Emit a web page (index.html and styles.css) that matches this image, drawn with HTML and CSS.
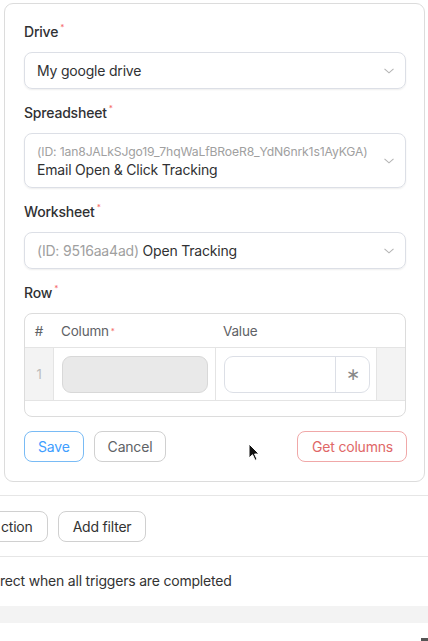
FILE: index.html
```html
<!DOCTYPE html>
<html>
<head lang="en">
    <meta charset="UTF-8">
    <title>Spreadsheet action</title>
    <link rel="stylesheet" href="styles.css">
</head>
<body>
    <div id="page">
        <div class="card">
            <div class="field">
                <div class="label">Drive<span class="req">*</span></div>
                <div class="select">
                    <div class="select-text">My google drive</div>
                    <svg class="chevron" width="10" height="6" viewBox="0 0 10 6"><path d="M0.5 0.8l4.5 4 4.5-4" fill="none" stroke="#b4b4b4" stroke-width="1.1"/></svg>
                </div>
            </div>
            <div class="field">
                <div class="label">Spreadsheet<span class="req">*</span></div>
                <div class="select tall">
                    <div class="select-text">
                        <div class="id small">(ID: 1an8JALkSJgo19_7hqWaLfBRoeR8_YdN6nrk1s1AyKGA)</div>
                        <div>Email Open &amp; Click Tracking</div>
                    </div>
                    <svg class="chevron" width="10" height="6" viewBox="0 0 10 6"><path d="M0.5 0.8l4.5 4 4.5-4" fill="none" stroke="#b4b4b4" stroke-width="1.1"/></svg>
                </div>
            </div>
            <div class="field">
                <div class="label">Worksheet<span class="req">*</span></div>
                <div class="select">
                    <div class="select-text"><span class="id">(ID: 9516aa4ad)</span> Open Tracking</div>
                    <svg class="chevron" width="10" height="6" viewBox="0 0 10 6"><path d="M0.5 0.8l4.5 4 4.5-4" fill="none" stroke="#b4b4b4" stroke-width="1.1"/></svg>
                </div>
            </div>
            <div class="field">
                <div class="label">Row<span class="req">*</span></div>
                <div class="table">
                    <div class="thead">
                        <div class="th num">#</div>
                        <div class="th">Column<span class="req">*</span></div>
                        <div class="th">Value</div>
                        <div class="th"></div>
                    </div>
                    <div class="trow">
                        <div class="td num">1</div>
                        <div class="td"><div class="col-input"></div></div>
                        <div class="td">
                            <div class="val-input">
                                <div class="val-box"></div>
                                <div class="val-btn">&#x2217;</div>
                            </div>
                        </div>
                        <div class="td act"></div>
                    </div>
                    <div class="tfoot"></div>
                </div>
            </div>
            <div class="actions">
                <span class="btn btn-save">Save</span>
                <span class="btn">Cancel</span>
                <span class="spacer"></span>
                <span class="btn btn-red">Get columns</span>
            </div>
            <svg class="cursor" width="12" height="18" viewBox="0 0 12 18"><path d="M1 1v14l3.5-3.3 2.6 5.6 2-0.9-2.5-5.4H11z" fill="#111" stroke="#fff" stroke-width="1"/></svg>
        </div>

        <div class="divider"></div>
        <div class="btn-row">
            <span class="btn btn-cut">ction</span>
            <span class="btn btn-dark">Add filter</span>
        </div>
        <div class="divider"></div>
        <div class="note">rect when all triggers are completed</div>
        <div class="band"></div>
        <div class="mark"></div>
    </div>
</body>
</html>
```

FILE: styles.css
```css
*{
    margin: 0;
    padding: 0;
    box-sizing: border-box;
}
html, body{
    background: #fff;
    overflow: hidden;
}
body{
    font-family: Inter, "Liberation Sans", sans-serif;
    font-size: 14px;
    color: #333;
    letter-spacing: -0.2px;
}
#page{
    width: 428px;
    height: 641px;
    overflow: hidden;
}
.card{
    position: relative;
    margin: 3px 3px 0 4px;
    padding: 18px 18px 19px 19px;
    border: 1px solid #dcdcdc;
    border-radius: 9px;
    background: #fff;
}
.field{
    margin-bottom: 14px;
}
.label{
    font-size: 14px;
    font-weight: 500;
    line-height: 20px;
    color: #303133;
    margin-bottom: 10px;
}
.req{
    color: #f56c6c;
    font-size: 8px;
    vertical-align: top;
    margin-left: 2px;
    line-height: 10px;
}
.select{
    display: flex;
    align-items: center;
    height: 37px;
    padding: 0 11px 0 12px;
    border: 1px solid #dcdfe6;
    border-radius: 8px;
    box-shadow: 0 1px 2px rgba(0,0,0,0.07);
    font-size: 14px;
    color: #303133;
}
.select.tall{
    height: 55px;
}
.select-text{
    flex: 1;
    white-space: nowrap;
    line-height: 19px;
}
.id{
    color: #a0a0a0;
}
.id.small{
    font-size: 12.2px;
    line-height: 17px;
    letter-spacing: -0.15px;
}
.chevron{
    flex: none;
}
.table{
    border: 1px solid #dcdcdc;
    border-radius: 8px;
    overflow: hidden;
}
.thead, .trow{
    display: grid;
    grid-template-columns: 28px 162px 161px 1fr;
}
.thead{
    height: 34px;
    border-bottom: 1px solid #e4e4e4;
}
.th{
    display: flex;
    align-items: center;
    padding-left: 8px;
    color: #606266;
    font-size: 13.5px;
}
.th.num, .td.num{
    justify-content: center;
    padding-left: 0;
}
.trow{
    height: 53px;
    border-bottom: 1px solid #e4e4e4;
}
.td{
    display: flex;
    align-items: center;
    padding-left: 8px;
    border-left: 1px solid #e4e4e4;
}
.td.num{
    border-left: none;
    background: #f3f3f3;
    color: #bbb;
    font-size: 13px;
}
.td.act{
    background: #f3f3f3;
    padding-left: 0;
}
.col-input{
    width: 146px;
    height: 37px;
    background: #e9e9e9;
    border: 1px solid #d8d8d8;
    border-radius: 9px;
}
.val-input{
    display: flex;
    width: 146px;
    height: 37px;
    border: 1px solid #dcdfe6;
    border-radius: 9px;
    overflow: hidden;
}
.val-box{
    flex: 1;
}
.val-btn{
    width: 34px;
    border-left: 1px solid #dcdfe6;
    display: flex;
    align-items: center;
    justify-content: center;
    color: #888;
    font-size: 17px;
}
.tfoot{
    height: 15px;
}
.actions{
    display: flex;
    align-items: center;
    gap: 10px;
}
.spacer{
    flex: 1;
}
.btn{
    display: inline-flex;
    align-items: center;
    height: 31px;
    padding: 0 13px;
    border: 1px solid #d0d0d0;
    border-radius: 8px;
    color: #606266;
    font-size: 14px;
    background: #fff;
}
.btn-save{
    color: #409eff;
    border-color: #79bbf5;
}
.btn-red{
    color: #e06767;
    border-color: #f0a8a8;
    padding: 0 13px 0 14px;
    margin-right: -1px;
}
.cursor{
    position: absolute;
    left: 243px;
    top: 439px;
}
.divider{
    height: 1px;
    background: #e6e6e6;
    margin-top: 13px;
}
.btn-row{
    display: flex;
    gap: 10px;
    padding: 15px 0 14px;
    margin-left: -14px;
}
.btn-row + .divider{
    margin-top: 0;
}
.btn-dark{
    color: #333;
    padding: 0 14px;
}
.btn-cut{
    color: #333;
    padding: 0 14px;
}
.note{
    padding: 14px 0 0;
    line-height: 20px;
    font-size: 14px;
    color: #333;
    white-space: nowrap;
}
.band{
    height: 17px;
    margin-top: 15px;
    background: #f3f3f3;
}
.mark{
    width: 7px;
    height: 4px;
    margin: 15px 0 0 auto;
    background: #555;
}
```
